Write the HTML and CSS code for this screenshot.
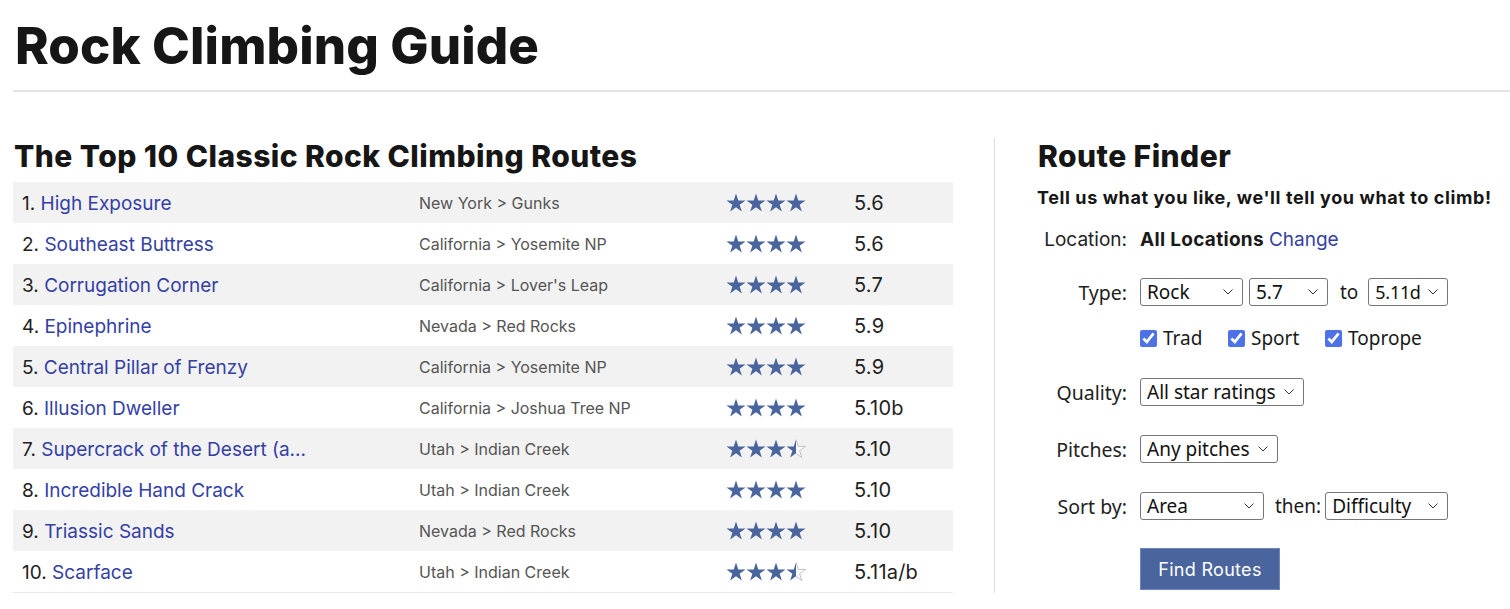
FILE: index.html
```html
<!DOCTYPE html>
<html lang="en">
<head>
<meta charset="utf-8">
<title>Rock Climbing Guide</title>
<link rel="stylesheet" href="styles.css">
</head>
<body>
<svg class="defs" width="0" height="0" aria-hidden="true">
  <defs>
    <symbol id="star" viewBox="0 0 20 20">
      <path d="M10 0.5 L12.25 7.41 L19.51 7.41 L13.63 11.68 L15.88 18.59 L10 14.32 L4.12 18.59 L6.37 11.68 L0.49 7.41 L7.75 7.41 Z"/>
    </symbol>
    <clipPath id="lefthalf"><rect x="0" y="0" width="10" height="20"/></clipPath>
    <clipPath id="righthalf"><rect x="10" y="0" width="10" height="20"/></clipPath>
  </defs>
</svg>
<header class="page-header">
  <h1 class="page-title">Rock Climbing Guide</h1>
</header>
<main class="main">
  <section class="routes">
    <h2 class="section-title">The Top 10 Classic Rock Climbing Routes</h2>
    <div class="route-table">
      <div class="route-row">
        <div class="c-name">1. <a href="#">High Exposure</a></div>
        <div class="c-loc">New York &gt; Gunks</div>
        <div class="c-stars"><svg class="stars" viewBox="0 0 80 20"><use href="#star" x="0" width="20" height="20"/><use href="#star" x="20" width="20" height="20"/><use href="#star" x="40" width="20" height="20"/><use href="#star" x="60" width="20" height="20"/></svg></div>
        <div class="c-grade">5.6</div>
      </div>
      <div class="route-row">
        <div class="c-name">2. <a href="#">Southeast Buttress</a></div>
        <div class="c-loc">California &gt; Yosemite NP</div>
        <div class="c-stars"><svg class="stars" viewBox="0 0 80 20"><use href="#star" x="0" width="20" height="20"/><use href="#star" x="20" width="20" height="20"/><use href="#star" x="40" width="20" height="20"/><use href="#star" x="60" width="20" height="20"/></svg></div>
        <div class="c-grade">5.6</div>
      </div>
      <div class="route-row">
        <div class="c-name">3. <a href="#">Corrugation Corner</a></div>
        <div class="c-loc">California &gt; Lover's Leap</div>
        <div class="c-stars"><svg class="stars" viewBox="0 0 80 20"><use href="#star" x="0" width="20" height="20"/><use href="#star" x="20" width="20" height="20"/><use href="#star" x="40" width="20" height="20"/><use href="#star" x="60" width="20" height="20"/></svg></div>
        <div class="c-grade">5.7</div>
      </div>
      <div class="route-row">
        <div class="c-name">4. <a href="#">Epinephrine</a></div>
        <div class="c-loc">Nevada &gt; Red Rocks</div>
        <div class="c-stars"><svg class="stars" viewBox="0 0 80 20"><use href="#star" x="0" width="20" height="20"/><use href="#star" x="20" width="20" height="20"/><use href="#star" x="40" width="20" height="20"/><use href="#star" x="60" width="20" height="20"/></svg></div>
        <div class="c-grade">5.9</div>
      </div>
      <div class="route-row">
        <div class="c-name">5. <a href="#">Central Pillar of Frenzy</a></div>
        <div class="c-loc">California &gt; Yosemite NP</div>
        <div class="c-stars"><svg class="stars" viewBox="0 0 80 20"><use href="#star" x="0" width="20" height="20"/><use href="#star" x="20" width="20" height="20"/><use href="#star" x="40" width="20" height="20"/><use href="#star" x="60" width="20" height="20"/></svg></div>
        <div class="c-grade">5.9</div>
      </div>
      <div class="route-row">
        <div class="c-name">6. <a href="#">Illusion Dweller</a></div>
        <div class="c-loc">California &gt; Joshua Tree NP</div>
        <div class="c-stars"><svg class="stars" viewBox="0 0 80 20"><use href="#star" x="0" width="20" height="20"/><use href="#star" x="20" width="20" height="20"/><use href="#star" x="40" width="20" height="20"/><use href="#star" x="60" width="20" height="20"/></svg></div>
        <div class="c-grade">5.10b</div>
      </div>
      <div class="route-row">
        <div class="c-name">7. <a href="#">Supercrack of the Desert (a...</a></div>
        <div class="c-loc">Utah &gt; Indian Creek</div>
        <div class="c-stars"><svg class="stars" viewBox="0 0 80 20"><use href="#star" x="0" width="20" height="20"/><use href="#star" x="20" width="20" height="20"/><use href="#star" x="40" width="20" height="20"/><g transform="translate(60 0)"><use href="#star" width="20" height="20" clip-path="url(#lefthalf)"/><use href="#star" class="star-empty" width="20" height="20" clip-path="url(#righthalf)"/></g></svg></div>
        <div class="c-grade">5.10</div>
      </div>
      <div class="route-row">
        <div class="c-name">8. <a href="#">Incredible Hand Crack</a></div>
        <div class="c-loc">Utah &gt; Indian Creek</div>
        <div class="c-stars"><svg class="stars" viewBox="0 0 80 20"><use href="#star" x="0" width="20" height="20"/><use href="#star" x="20" width="20" height="20"/><use href="#star" x="40" width="20" height="20"/><use href="#star" x="60" width="20" height="20"/></svg></div>
        <div class="c-grade">5.10</div>
      </div>
      <div class="route-row">
        <div class="c-name">9. <a href="#">Triassic Sands</a></div>
        <div class="c-loc">Nevada &gt; Red Rocks</div>
        <div class="c-stars"><svg class="stars" viewBox="0 0 80 20"><use href="#star" x="0" width="20" height="20"/><use href="#star" x="20" width="20" height="20"/><use href="#star" x="40" width="20" height="20"/><use href="#star" x="60" width="20" height="20"/></svg></div>
        <div class="c-grade">5.10</div>
      </div>
      <div class="route-row">
        <div class="c-name">10. <a href="#">Scarface</a></div>
        <div class="c-loc">Utah &gt; Indian Creek</div>
        <div class="c-stars"><svg class="stars" viewBox="0 0 80 20"><use href="#star" x="0" width="20" height="20"/><use href="#star" x="20" width="20" height="20"/><use href="#star" x="40" width="20" height="20"/><g transform="translate(60 0)"><use href="#star" width="20" height="20" clip-path="url(#lefthalf)"/><use href="#star" class="star-empty" width="20" height="20" clip-path="url(#righthalf)"/></g></svg></div>
        <div class="c-grade">5.11a/b</div>
      </div>
    </div>
  </section>
  <aside class="finder">
    <h2 class="section-title">Route Finder</h2>
    <p class="finder-sub">Tell us what you like, we'll tell you what to climb!</p>
    <form class="finder-form">
      <div class="f-row f-loc">
        <span class="f-label f-label-loc">Location:</span>
        <span class="f-ctrl"><strong>All Locations</strong> <a href="#">Change</a></span>
      </div>
      <div class="f-row f-type">
        <span class="f-label">Type:</span>
        <span class="f-ctrl">
          <select class="sel w-rock"><option>Rock</option></select>
          <select class="sel w-grade"><option>5.7</option></select>
          <span class="f-to">to</span>
          <select class="sel w-grade2"><option>5.11d</option></select>
        </span>
      </div>
      <div class="f-row f-checks">
        <span class="f-label"></span>
        <span class="f-ctrl">
          <label class="chk chk-trad"><input type="checkbox" checked> Trad</label>
          <label class="chk chk-sport"><input type="checkbox" checked> Sport</label>
          <label class="chk"><input type="checkbox" checked> Toprope</label>
        </span>
      </div>
      <div class="f-row f-sel">
        <span class="f-label">Quality:</span>
        <span class="f-ctrl"><select class="sel w-quality"><option>All star ratings</option></select></span>
      </div>
      <div class="f-row f-sel">
        <span class="f-label">Pitches:</span>
        <span class="f-ctrl"><select class="sel w-pitches"><option>Any pitches</option></select></span>
      </div>
      <div class="f-row f-sel">
        <span class="f-label">Sort by:</span>
        <span class="f-ctrl">
          <select class="sel w-area"><option>Area</option></select>
          <span class="f-then">then:</span>
          <select class="sel w-diff"><option>Difficulty</option></select>
        </span>
      </div>
      <div class="f-row f-btn">
        <span class="f-label"></span>
        <span class="f-ctrl"><button type="button" class="btn">Find Routes</button></span>
      </div>
    </form>
  </aside>
</main>
</body>
</html>
```

FILE: styles.css
```css
html, body {
  margin: 0;
  padding: 0;
  background: #fff;
}
body {
  font-family: Inter, Roboto, "Liberation Sans", sans-serif;
  color: #1a1a1a;
  overflow: hidden;
}
.defs {
  position: absolute;
  width: 0;
  height: 0;
}
a {
  color: #3440a6;
  text-decoration: none;
}
.page-header {
  margin-left: 13px;
  border-bottom: 2px solid #e3e3e3;
  padding-top: 20px;
  padding-bottom: 18px;
}
.page-title {
  margin: 0 0 0 2px;
  font-size: 51px;
  line-height: 52px;
  font-weight: 800;
  color: #161616;
  letter-spacing: 0.1px;
}
.main {
  display: flex;
  margin-top: 46px;
}
.routes {
  width: 940px;
  margin-left: 13px;
}
.section-title {
  margin: 0 0 8px 1px;
  font-size: 30px;
  line-height: 36px;
  font-weight: 800;
  color: #161616;
  letter-spacing: 0.45px;
}
.route-table {
  border-bottom: 1px solid #e8e8e8;
}
.route-row {
  display: flex;
  align-items: center;
  height: 41px;
}
.route-row:nth-child(odd) {
  background: #f2f2f2;
}
.c-name {
  width: 397px;
  padding-left: 9px;
  padding-top: 1px;
  font-size: 19px;
  letter-spacing: 0;
  color: #222;
  white-space: nowrap;
}
.c-loc {
  width: 307px;
  padding-top: 1px;
  font-size: 16px;
  color: #555;
}
.c-stars {
  width: 128px;
  display: flex;
}
.stars {
  width: 80px;
  height: 20px;
  fill: #4a659e;
}
.star-empty {
  fill: #fff;
  stroke: #b9b9b9;
  stroke-width: 0.9;
}
.c-grade {
  padding-top: 1px;
  font-size: 20px;
  letter-spacing: 0.2px;
  color: #222;
}
.finder {
  flex: 1;
  margin-left: 41px;
  border-left: 1px solid #dedede;
  padding-left: 42px;
}
.finder-sub {
  margin: 12px 0 0;
  font-size: 18px;
  line-height: 24px;
  font-weight: 700;
  letter-spacing: 0.6px;
  color: #161616;
}
.finder-form {
  display: flex;
  flex-direction: column;
}
.f-row {
  display: flex;
  align-items: center;
}
.f-label {
  width: 90px;
  flex: none;
  text-align: right;
  margin-right: 13px;
  font-family: "Noto Sans", "Open Sans", sans-serif;
  font-size: 19.5px;
  color: #222;
}
.f-label-loc {
  font-family: Inter, Roboto, sans-serif;
  font-size: 19px;
}
.f-ctrl {
  display: flex;
  align-items: center;
  font-family: "Noto Sans", "Open Sans", sans-serif;
  font-size: 19px;
}
.f-loc .f-ctrl {
  font-family: Inter, Roboto, sans-serif;
  font-size: 19px;
}
.f-loc {
  margin-top: 17px;
  height: 24px;
}
.f-loc strong {
  font-weight: 700;
  letter-spacing: 0.3px;
  margin-right: 5px;
}
.f-type {
  margin-top: 27px;
  height: 28px;
}
.f-checks {
  margin-top: 20px;
  height: 24px;
}
.f-sel {
  margin-top: 28px;
  height: 28px;
}
.f-sel:nth-child(5) {
  margin-top: 29px;
}
.f-sel:nth-child(6) {
  margin-top: 29px;
}
.f-btn {
  margin-top: 28px;
}
.sel {
  appearance: none;
  -webkit-appearance: none;
  height: 28px;
  box-sizing: border-box;
  border: 1px solid #767676;
  border-radius: 3px;
  background: #fff url("data:image/svg+xml,%3Csvg xmlns='http://www.w3.org/2000/svg' width='10' height='6' viewBox='0 0 10 6'%3E%3Cpath d='M0.5 0.5 L5 5 L9.5 0.5' fill='none' stroke='%23333' stroke-width='1'/%3E%3C/svg%3E") no-repeat right 9px center;
  font-family: "Noto Sans", "Open Sans", sans-serif;
  font-size: 19px;
  color: #111;
  padding: 0 20px 0 6px;
  line-height: 26px;
}
.w-rock { width: 103px; margin-right: 6px; }
.w-grade { width: 79px; }
.w-grade2 { width: 80px; font-size: 18px; letter-spacing: -0.3px; padding-right: 14px; }
.w-quality { width: 164px; }
.w-pitches { width: 138px; }
.w-area { width: 124px; }
.w-diff { width: 123px; }
.f-to {
  margin: 0 10px 0 12px;
}
.f-then {
  margin: 0 4px 0 11px;
}
.chk {
  display: flex;
  align-items: center;
}
.chk-trad { width: 88px; }
.chk-sport { width: 97px; }
.chk input {
  width: 17px;
  height: 17px;
  margin: 0 6px 0 0;
  accent-color: #4d72e6;
}
.btn {
  width: 140px;
  height: 42px;
  background: #4a659e;
  border: 1px solid #6f87b8;
  color: #fff;
  font-family: Inter, Roboto, "Liberation Sans", sans-serif;
  font-size: 18px;
  letter-spacing: 0.3px;
  cursor: pointer;
}
```
